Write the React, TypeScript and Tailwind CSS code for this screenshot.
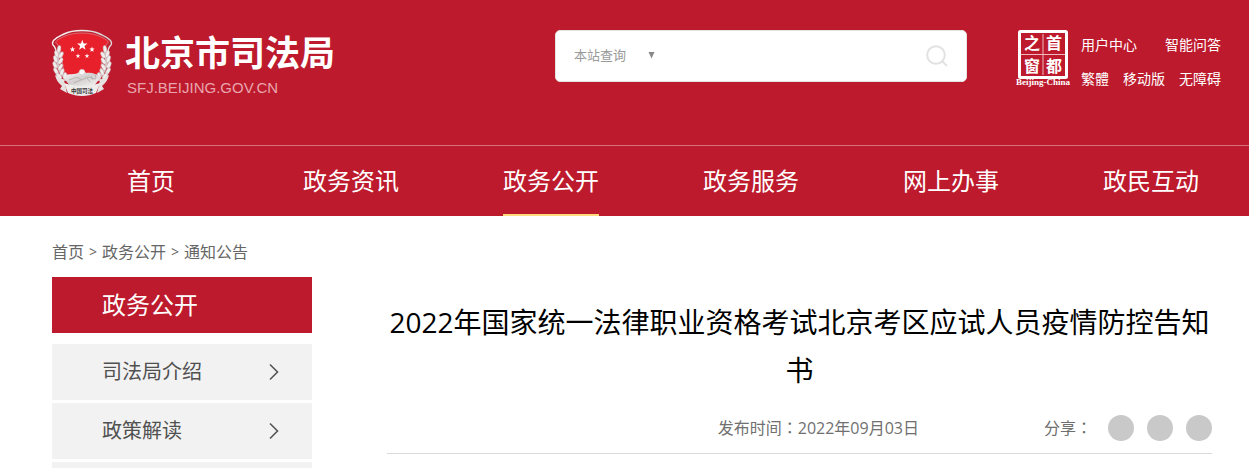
import React from "react";

const navItems = ["首页", "政务资讯", "政务公开", "政务服务", "网上办事", "政民互动"];
const sideItems = ["司法局介绍", "政策解读"];

function Star({ x, y, r }: { x: number; y: number; r: number }) {
  const points = Array.from({ length: 10 }, (_, i) => {
    const radius = i % 2 === 0 ? r : r * 0.4;
    const angle = (Math.PI / 5) * i - Math.PI / 2;
    return `${(x + radius * Math.cos(angle)).toFixed(2)},${(y + radius * Math.sin(angle)).toFixed(2)}`;
  }).join(" ");
  return <polygon points={points} fill="#fff" />;
}

function WheatBranch() {
  const grains = [
    [8, 20, 10], [5.5, 25, -16], [10, 26, 30], [4.5, 30, -18], [9.5, 32, 32],
    [4, 36, -24], [9.5, 38, 28], [5, 42, -32], [11, 43, 20], [8, 47, -42], [14, 47, 6],
  ];
  return (
    <g>
      <path d="M8 22 C5 31 6 42 16 50" fill="none" stroke="#d5c5c7" strokeWidth="3" />
      {grains.map(([x, y, a]) => (
        <ellipse key={`${x}-${y}`} cx={x} cy={y} rx="1.800" ry="3.600" fill="#f1eded" stroke="#b9a5a8" strokeWidth=".4" transform={`rotate(${a} ${x} ${y})`} />
      ))}
    </g>
  );
}

function Emblem() {
  return (
    <svg width="62" height="68" viewBox="0 0 62 68" aria-hidden="true" className="shrink-0">
      <defs>
        <linearGradient id="silver" x1="0" y1="0" x2="1" y2="1">
          <stop offset="0" stopColor="#fff" />
          <stop offset=".5" stopColor="#d3cecf" />
          <stop offset="1" stopColor="#f7f5f5" />
        </linearGradient>
      </defs>
      <path d="M31 1.500C25 1.500 18 2.500 13 5 9 7 6 8 3 11 1.500 12.500 1 14 2 16 6 20 6 25 4 31 2 39 5 47 10 51L52 51C57 47 60 39 58 31 56 25 56 20 60 16 61 14 60.500 12.500 59 11 56 8 53 7 49 5 44 2.500 37 1.500 31 1.500Z" fill="#c3202f" stroke="url(#silver)" strokeWidth="1.400" />
      <path d="M31 4C25 4 19 5 14 7 10 9 7 10 4.500 13 9 18 11 24 11 31L13 43 20 48H42L49 43 51 31C51 24 53 18 57.500 13 55 10 52 9 48 7 43 5 37 4 31 4Z" fill="#e8202b" stroke="#dc9ba0" strokeWidth=".6" />
      <WheatBranch />
      <g transform="matrix(-1 0 0 1 62 0)"><WheatBranch /></g>
      <Star x={31.300} y={16.300} r={5.500} />
      <Star x={21.500} y={20.500} r={2.900} />
      <Star x={41} y={20.500} r={2.900} />
      <Star x={27} y={27} r={2.500} />
      <Star x={36} y={27} r={2.500} />
      <path d="M12 48C18 43 24 47 28 43 31 40 34 42 35 44 41 43 45 45 50 48L43 57H19Z" fill="url(#silver)" />
      <circle cx="31" cy="43" r="2.800" fill="#f8f8f8" stroke="#bbb" strokeWidth=".4" />
      <path d="M18 51l8-3 5 3 6-3 8 2M23 54l7-3M36 49l3 4M40 47l2 4M44 46l1 3" stroke="#aaa3a4" strokeWidth=".7" fill="none" />
      <path d="M4 46L13 51 16 64 9 60 11 57C7 54 5 50 4 46ZM58 46L49 51 46 64 53 60 51 57C55 54 57 50 58 46Z" fill="#e6e2e2" />
      <path d="M13 54C24 58 38 58 49 54L45 64C36 68 26 68 17 64Z" fill="#efecec" />
      <text x="31" y="63.500" fontSize="5.500" fontWeight="700" textAnchor="middle" fill="#333" fontFamily="'Noto Sans CJK SC', sans-serif">中国司法</text>
    </svg>
  );
}

function CapitalWindow() {
  return (
    <svg width="56" height="60" viewBox="0 0 56 60" role="img" aria-label="首都之窗" className="shrink-0">
      <rect x="4.500" y="2.500" width="47" height="46" rx="1" fill="none" stroke="#fff" strokeWidth="3" />
      <path d="M28 5V46M6 25.500H50" stroke="#efb8bf" strokeWidth="1" />
      <g fill="#fff" fontSize="16" fontWeight="700" textAnchor="middle" fontFamily="'Noto Sans CJK SC', sans-serif">
        <text x="17" y="20">之</text>
        <text x="39" y="20">首</text>
        <text x="17" y="43">窗</text>
        <text x="39" y="43">都</text>
      </g>
      <text x="28" y="56" textAnchor="middle" fill="#fff" fontSize="9" fontWeight="700" fontFamily="'Liberation Serif', serif">Beijing-China</text>
    </svg>
  );
}

function Colon() {
  return <span className="font-['Noto_Sans_CJK_TC',sans-serif]">：</span>;
}

export default function App() {
  return (
    <div className="font-['Open_Sans','Noto_Sans_CJK_SC',sans-serif] bg-white text-[#555]">
      <header className="overflow-x-clip bg-[#bd1a2d] text-white">
        <div className="flex h-[145px] items-start pt-[29px] pr-7 pl-[51px]">
          <a href="#" className="flex gap-3">
            <Emblem />
            <span className="flex flex-col whitespace-nowrap">
              <strong className="text-[35px] leading-[48px] font-bold">北京市司法局</strong>
              <span className="pl-0.5 font-['Liberation_Sans',sans-serif] text-[15px] leading-[22px] text-[#e9a5ad]">SFJ.BEIJING.GOV.CN</span>
            </span>
          </a>
          <form className="mt-px mr-12 ml-auto flex h-[52px] w-[412px] items-center rounded-[5px] border border-[#e3e3e3] bg-white px-[18px]">
            <select aria-label="查询范围" className="w-[74px] appearance-none bg-transparent text-[13px] text-[#999] outline-none">
              <option>本站查询</option>
            </select>
            <svg width="7" height="7" viewBox="0 0 7 7" aria-hidden="true" className="mb-0.5 shrink-0"><path d="M.5 0H6.500L3.500 6.500Z" fill="#888" /></svg>
            <input type="text" aria-label="搜索关键词" className="min-w-0 flex-1 bg-transparent px-3 text-[13px] text-[#333] outline-none" />
            <button type="button" aria-label="搜索">
              <svg width="22" height="22" viewBox="0 0 22 22" fill="none" stroke="#e2e2e2" strokeWidth="2">
                <circle cx="10" cy="10" r="8.800" />
                <path d="M16 16L21 21" />
              </svg>
            </button>
          </form>
          <div className="flex gap-[10px] whitespace-nowrap text-[14px] leading-[34px]">
            <CapitalWindow />
            <div className="-mt-px">
              <div className="flex justify-between">
                <a href="#">用户中心</a>
                <a href="#">智能问答</a>
              </div>
              <div className="flex gap-[14px]">
                <a href="#">繁體</a>
                <a href="#">移动版</a>
                <a href="#">无障碍</a>
              </div>
            </div>
          </div>
        </div>
        <nav className="-mr-0.5 grid grid-cols-6 justify-items-center border-t border-[#d4717c] pl-[51px] text-[24px] leading-[70px]">
          {navItems.map((item) => (
            <a key={item} href="#" className={item === "政务公开" ? "h-[70px] shadow-[inset_0_-2px_0_#ffdb7d]" : "h-[70px]"}>{item}</a>
          ))}
        </nav>
      </header>

      <div className="pr-[37px] pl-[52px]">
        <nav aria-label="当前位置" className="flex items-center gap-[5px] pt-5 text-[16px] leading-8 text-[#666]">
          <a href="#">首页</a>
          <span className="text-[14px]">&gt;</span>
          <a href="#">政务公开</a>
          <span className="text-[14px]">&gt;</span>
          <a href="#">通知公告</a>
        </nav>
        <div className="flex items-start gap-[75px] pt-[9px]">
          <aside className="w-[260px] shrink-0">
            <h2 className="bg-[#bd1a2d] pl-[50px] text-[24px] leading-[56px] text-white">政务公开</h2>
            <ul className="flex flex-col gap-[3px] pt-[11px]">
              {sideItems.map((item) => (
                <li key={item}>
                  <a href="#" className="flex h-14 items-center justify-between bg-[#f2f2f2] pr-8 pl-[50px] text-[20px] leading-[58px] text-[#505050]">
                    {item}
                    <svg width="12" height="18" viewBox="0 0 12 18" fill="none" stroke="#555" strokeWidth="1.600" aria-hidden="true"><path d="M2 1.500L9.500 9L2 16.500" /></svg>
                  </a>
                </li>
              ))}
              <li className="h-1.5 bg-[#f2f2f2]" />
            </ul>
          </aside>
          <main className="min-w-0 flex-1 pt-[21px]">
            <h1 className="text-center text-[28px] leading-[48px] text-black">2022年国家统一法律职业资格考试北京考区应试人员疫情防控告知书</h1>
            <div className="flex items-center border-b border-[#d9d9d9] pt-5 pb-3 text-[16px] leading-[26px] text-[#707070]">
              <p className="flex-1 text-right">发布时间<Colon />2022年09月03日</p>
              <div className="ml-[125px] flex items-center gap-[13px]">
                <span className="pr-[3px]">分享<Colon /></span>
                {["微信", "微博", "空间"].map((name) => (
                  <button key={name} type="button" aria-label={name} className="size-[26px] rounded-full bg-[#c9c9c9]" />
                ))}
              </div>
            </div>
          </main>
        </div>
      </div>
    </div>
  );
}
